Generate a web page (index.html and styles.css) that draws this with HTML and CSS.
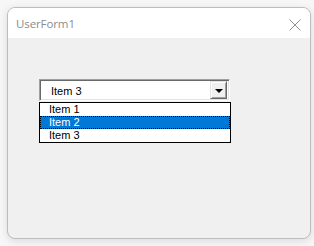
FILE: index.html
```html
<!DOCTYPE html>
<html>
<head>
<meta charset="utf-8">
<link rel="stylesheet" href="styles.css">
</head>
<body>
<div class="window">
  <div class="titlebar">
    <span class="title">UserForm1</span>
    <svg class="close" width="12" height="12" viewBox="0 0 12 12"><path d="M0.5 0.5 L11.5 11.5 M11.5 0.5 L0.5 11.5" stroke="#929292" stroke-width="1" fill="none"/></svg>
  </div>
  <div class="client">
    <div class="combo">
      <div class="combo-field">
        <span class="combo-text">Item 3</span>
        <div class="combo-btn"><span class="arrow"></span></div>
      </div>
      <div class="list">
        <div class="item">Item 1</div>
        <div class="item selected">Item 2</div>
        <div class="item">Item 3</div>
      </div>
    </div>
  </div>
</div>
</body>
</html>
```
FILE: styles.css
```css
html, body {
  margin: 0;
  padding: 0;
  background: #f7f7f7;
  width: 314px;
  height: 246px;
  overflow: hidden;
}
.window {
  margin: 7px 0 0 7px;
  width: 304px;
  height: 232px;
  box-sizing: border-box;
  border: 1px solid #bdbdbd;
  border-radius: 8px;
  background: #f0f0f0;
  overflow: hidden;
  box-shadow: 0 2px 8px rgba(0,0,0,0.12);
  display: flex;
  flex-direction: column;
}
.titlebar {
  height: 30px;
  background: #ffffff;
  display: flex;
  align-items: center;
  justify-content: space-between;
  padding: 1px 9px 0 8px;
  box-sizing: border-box;
  flex: none;
}
.title {
  font-family: "Open Sans", "Noto Sans", sans-serif;
  font-size: 11.5px;
  color: #8c8c8c;
  letter-spacing: -0.1px;
}
.close {
  display: block;
  margin-top: 2px;
}
.client {
  flex: 1;
  padding: 41px 0 0 31px;
}
.combo {
  width: 192px;
  font-family: "Liberation Sans", Arial, sans-serif;
  font-size: 11px;
  color: #000;
}
.combo-field {
  width: 191px;
  height: 22px;
  box-sizing: border-box;
  border-style: solid;
  border-width: 1px;
  border-color: #a0a0a0 #ffffff #ffffff #a0a0a0;
  box-shadow: inset 1px 1px 0 #696969, inset -1px -1px 0 #e3e3e3;
  background: #fff;
  display: flex;
  align-items: center;
  justify-content: space-between;
  padding: 2px;
}
.combo-text {
  padding-left: 9px;
  padding-top: 1px;
}
.combo-btn {
  width: 17px;
  height: 18px;
  box-sizing: border-box;
  background: #f0f0f0;
  border-style: solid;
  border-width: 1px;
  border-color: #e3e3e3 #696969 #696969 #e3e3e3;
  box-shadow: inset 1px 1px 0 #ffffff, inset -1px -1px 0 #a0a0a0;
  display: flex;
  align-items: center;
  justify-content: center;
}
.arrow {
  width: 0;
  height: 0;
  border-left: 4px solid transparent;
  border-right: 4px solid transparent;
  border-top: 4px solid #000;
  margin-top: 1px;
}
.list {
  margin-top: 1px;
  width: 192px;
  box-sizing: border-box;
  border: 1px solid #000;
  background: #fff;
}
.item {
  height: 13px;
  line-height: 13px;
  padding-left: 9px;
  box-sizing: border-box;
}
.item.selected {
  background: #0078d7;
  color: #fff;
  outline: 1px dotted #000;
  outline-offset: -1px;
}
```
